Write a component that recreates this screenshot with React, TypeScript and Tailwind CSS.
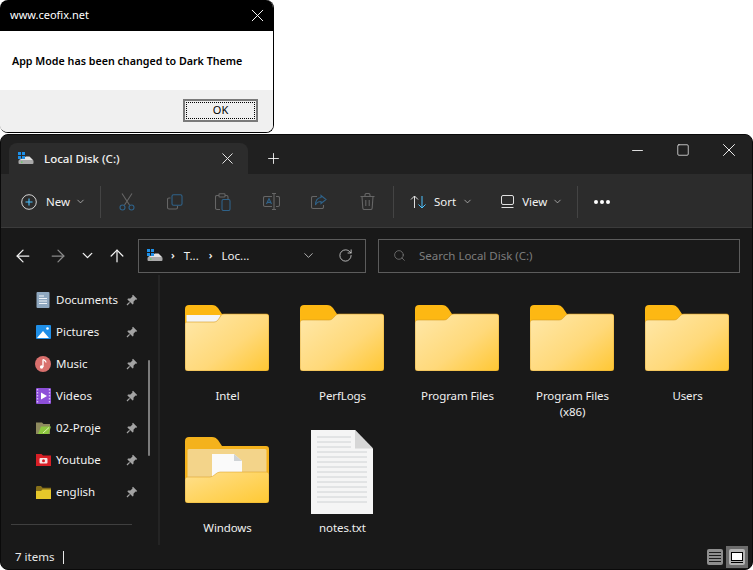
import { useId } from 'react';
import { ArrowLeft, ArrowRight, ArrowUp, ChevronDown, Minus, Plus, RotateCw, Search, Square, X } from 'lucide-react';

const font = { fontFamily: '"Noto Sans", sans-serif' };

function DriveIcon() {
  return (
    <svg width="16" height="13" viewBox="0 0 16 13" className="shrink-0">
      <path d="M8 4.500h3.500L15 8H1Z" fill="#e2e2e2" />
      <rect x="0" y="0" width="3" height="3" fill="#1e90e8" />
      <rect x="4" y="0" width="3" height="3" fill="#1e90e8" />
      <rect x="0" y="4" width="3" height="3" fill="#1e90e8" />
      <rect x="4" y="4" width="3" height="3" fill="#1e90e8" />
      <rect x="0.500" y="8" width="15" height="4" rx="1" fill="#a9a9a9" />
      <rect x="3" y="9.500" width="1.500" height="1.200" fill="#57d057" />
    </svg>
  );
}

function Folder({ paper = false }: { paper?: boolean }) {
  const id = useId();
  const front = paper
    ? 'M0 19C0 17.500 1 17 2.500 17H29C32 17 33 15 35 12C36 10 37 9 39 9H81C83 9 84 10 84 12V63C84 65 83 66 81 66H3C1 66 0 65 0 63Z'
    : 'M0 18C0 16 1 15 3 15H29C32 15 33 13 35 11C36 10 37 9 39 9H81C83 9 84 10 84 12V63C84 65 83 66 81 66H3C1 66 0 65 0 63Z';
  return (
    <svg width="84" height="66" viewBox="0 0 84 66">
      <defs>
        <linearGradient id={id} x1="0" y1="0.100" x2="1" y2="1">
          <stop offset="0" stopColor="#ffe7a6" />
          <stop offset="0.550" stopColor="#ffd97a" />
          <stop offset="1" stopColor="#ffc733" />
        </linearGradient>
      </defs>
      <path d="M0 4C0 1.500 1.500 0 4 0H27C30 0 31 1 33 3L37 9H81C83 9 84 10 84 12V30H0Z" fill="#fdb813" />
      {paper && <rect x="1.500" y="10" width="34" height="8" fill="#f4f5f7" />}
      <path d={front} fill={`url(#${id})`} stroke="#d79b1e" strokeWidth="0.600" />
    </svg>
  );
}

function OpenFolder() {
  const id = useId();
  return (
    <svg width="84" height="66" viewBox="0 0 84 66">
      <defs>
        <linearGradient id={id} x1="0" y1="0" x2="1" y2="1">
          <stop offset="0" stopColor="#ffe08e" />
          <stop offset="1" stopColor="#ffc933" />
        </linearGradient>
      </defs>
      <path d="M0 4C0 1.500 1.500 0 4 0H27C30 0 31 1 33 3L37 9H81C83 9 84 10 84 12V50H0Z" fill="#f4b21c" />
      <rect x="2.500" y="12" width="79" height="36" rx="1.500" fill="#f3d48a" />
      <path d="M27 17H49L57 24V48H27Z" fill="#fafafa" />
      <path d="M49 17V24H57Z" fill="#cfd3d6" />
      <path d="M0 43C0 41 1 40 3 40H25C29 40 31 35 35 35H81C83 35 84 36 84 38V63C84 65 83 66 81 66H3C1 66 0 65 0 63Z" fill={`url(#${id})`} stroke="#d79b1e" strokeWidth="0.500" />
    </svg>
  );
}

function TextFile() {
  return (
    <svg width="62" height="84" viewBox="0 0 62 84" className="mt-[4px]">
      <path d="M0 0H44L62 18.500V84H0Z" fill="#f5f5f5" />
      <path d="M44 0V18.500H62Z" fill="#d6d6d6" />
      <path d="M6 7H40M6 12H40M6 17H40M6 22H56M6 27H56M6 32H56M6 37H56M6 42H56M6 47H56M6 52H56M6 57H56M6 62H56M6 67H56M6 72H56" stroke="#cfd2d4" strokeWidth="1" />
    </svg>
  );
}

function Pin() {
  return (
    <svg width="12" height="12" viewBox="0 0 12 12" className="shrink-0">
      <path d="M7 .800 11.200 5 10.400 5.800 9.600 5.500 7.600 7.600 7.400 10 6.600 10.600 1.400 5.400 2 4.600 4.400 4.400 6.500 2.400 6.200 1.600Z" fill="#a3a3a3" />
      <path d="M3.600 8.400 1 11" stroke="#a3a3a3" strokeWidth="1.200" />
    </svg>
  );
}

const navIcons: Record<string, React.ReactNode> = {
  Documents: (
    <svg width="14" height="16" viewBox="0 0 14 16">
      <rect width="13" height="16" x="0.500" rx="1" fill="#8fa8c0" />
      <path d="M3 4h5M3 6.500h8M3 9h8M3 11.500h8" stroke="#f0f4f8" strokeWidth="1.200" />
    </svg>
  ),
  Pictures: (
    <svg width="15" height="14" viewBox="0 0 15 14">
      <rect width="15" height="14" rx="1" fill="#1f8fe8" />
      <path d="M1 13 7 6l6 7Z" fill="#fff" />
      <circle cx="11.500" cy="3.500" r="1.300" fill="#fff" />
    </svg>
  ),
  Music: (
    <svg width="16" height="16" viewBox="0 0 16 16">
      <circle cx="8" cy="8" r="8" fill="#d9706d" />
      <path d="M8 3.500v7.500" stroke="#fff" strokeWidth="1.300" />
      <path d="M8 3.500c1.500 1 3 1 3 3" stroke="#fff" strokeWidth="1.200" fill="none" />
      <circle cx="6.600" cy="11" r="1.700" fill="#fff" />
    </svg>
  ),
  Videos: (
    <svg width="15" height="16" viewBox="0 0 15 16">
      <rect width="15" height="16" rx="1" fill="#8d4fd8" />
      <path d="M1.500 1v14M13.500 1v14" stroke="#d8bdf8" strokeWidth="1.400" strokeDasharray="1.500 1.500" />
      <path d="M5 4.500 11 8l-6 3.500Z" fill="#fff" />
    </svg>
  ),
  '02-Proje': (
    <svg width="15" height="14" viewBox="0 0 15 14">
      <path d="M0 1.500h6l1.500 1.500H14v10H0Z" fill="#8e8a5e" />
      <path d="M2 13 5 5.500h10L12.500 13Z" fill="#8cc63f" />
      <path d="M7 12 13 6.500" stroke="#dff0b0" strokeWidth="1" />
    </svg>
  ),
  Youtube: (
    <svg width="15" height="12" viewBox="0 0 15 12">
      <path d="M0 0h5.500L7 1.500h8V12H0Z" fill="#d81f26" />
      <rect x="3.500" y="4" width="8" height="5.500" rx="1" fill="#f6e6e6" />
      <circle cx="7.500" cy="6.700" r="1.500" fill="#d81f26" />
    </svg>
  ),
  english: (
    <svg width="15" height="13" viewBox="0 0 15 13">
      <path d="M0 1.500C0 .700.500 0 1.300 0H5l1.500 1.700H15V13H0Z" fill="#87701a" />
      <path d="M0 5h5l1.500-1.500H15V13H0Z" fill="#e6c72a" />
    </svg>
  ),
};

function NavRow({ name }: { name: string }) {
  return (
    <div className="flex h-8 items-center pl-[34px] pr-[20px] text-[11.5px] text-[#f2f2f2]">
      <span className="flex w-[16px] shrink-0 justify-center">{navIcons[name]}</span>
      <span className="ml-[5px] flex-1">{name}</span>
      <Pin />
    </div>
  );
}

const files = ['Intel', 'PerfLogs', 'Program Files', 'Program Files (x86)', 'Users'];

function FileItem({ label, children }: { label: string; children: React.ReactNode }) {
  return (
    <div className="flex h-[132px] w-[115px] flex-col items-center">
      <div className="flex h-[96px] items-center justify-center">{children}</div>
      <div className="ml-[2px] mt-[2px] w-[90px] text-center text-[11.5px] leading-[16px] tracking-[-0.1px] text-[#f0f0f0]">{label}</div>
    </div>
  );
}

function Sep() {
  return <div className="h-[32px] w-px shrink-0 bg-[#444444]" />;
}

function Chev({ size = 11, color = '#c8c8c8' }: { size?: number; color?: string }) {
  return <ChevronDown size={size} color={color} strokeWidth={1.600} className="shrink-0" />;
}

function ToolbarIcons() {
  const g = '#666666';
  const b = '#2f6289';
  return (
    <div className="flex items-center">
      <span className="flex w-[48px] justify-center">
        <svg width="16" height="18" viewBox="0 0 16 18" fill="none" strokeWidth="1.100">
          <path d="M3 .500 10.500 12M13 .500 5.500 12" stroke={g} />
          <circle cx="3.500" cy="14.500" r="2.500" stroke={b} />
          <circle cx="12.500" cy="14.500" r="2.500" stroke={b} />
        </svg>
      </span>
      <span className="flex w-[48px] justify-center">
        <svg width="16" height="16" viewBox="0 0 16 16" fill="none" strokeWidth="1.100">
          <path d="M3.500 4H2a1.500 1.500 0 0 0-1.500 1.500v8A1.500 1.500 0 0 0 2 15h7a1.500 1.500 0 0 0 1.500-1.500V12" stroke={g} />
          <rect x="5" y=".800" width="10" height="10.500" rx="1.500" stroke={b} />
        </svg>
      </span>
      <span className="flex w-[48px] justify-center">
        <svg width="16" height="18" viewBox="0 0 16 18" fill="none" strokeWidth="1.100">
          <path d="M4 2.500H2A1.500 1.500 0 0 0 .500 4v11A1.500 1.500 0 0 0 2 16.500h3M10 2.500h1.500A1.500 1.500 0 0 1 13 4v2" stroke={g} />
          <rect x="4" y=".800" width="6" height="3.200" rx=".800" stroke={g} />
          <rect x="7" y="6.500" width="8" height="11" rx="1.400" stroke={b} />
        </svg>
      </span>
      <span className="flex w-[48px] justify-center">
        <svg width="17" height="17" viewBox="0 0 17 17" fill="none" strokeWidth="1.100">
          <path d="M9 3.500H2A1.500 1.500 0 0 0 .500 5v7A1.500 1.500 0 0 0 2 13.500h7M13 3.500h2A1.500 1.500 0 0 1 16.500 5v7a1.500 1.500 0 0 1-1.500 1.500h-2M11 .500v16M9 .500h4M9 16.500h4" stroke={g} />
          <path d="M3.500 11 6 5.500 8.500 11M4.400 9.400h3.200" stroke={b} />
        </svg>
      </span>
      <span className="flex w-[48px] justify-center">
        <svg width="16" height="16" viewBox="0 0 16 16" fill="none" strokeWidth="1.100">
          <path d="M6 2.500H2A1.500 1.500 0 0 0 .500 4v9A1.500 1.500 0 0 0 2 14.500h9a1.500 1.500 0 0 0 1.500-1.500v-2" stroke={g} />
          <path d="M10 1.500 15 5.500 10 9.500V7.500C7.500 7.500 5.500 8.500 4.500 11 4.500 7 6.500 3.800 10 3.500Z" stroke={b} />
        </svg>
      </span>
      <span className="flex w-[48px] justify-center">
        <svg width="15" height="17" viewBox="0 0 15 17" fill="none" stroke={g} strokeWidth="1.100">
          <path d="M.500 3.500h14M5 3.500V2a1.500 1.500 0 0 1 1.500-1.500h2A1.500 1.500 0 0 1 10 2v1.500M2 3.500l.800 11.500a1.500 1.500 0 0 0 1.500 1.500h6.400a1.500 1.500 0 0 0 1.500-1.500L13 3.500M5.800 7v6M9.200 7v6" />
        </svg>
      </span>
    </div>
  );
}

export default function App() {
  return (
    <div className="h-[570px] w-[753px] overflow-hidden bg-white" style={font}>
      {/* message box */}
      <div className="flex h-[133px] w-[274px] flex-col overflow-hidden rounded-[8px] border-r border-b border-black bg-white">
        <div className="flex h-[31px] shrink-0 items-center justify-between bg-black pl-[10px] pr-[5px] text-[11px] text-white">
          <span>www.ceofix.net</span>
          <X size={21} color="#ffffff" strokeWidth={1.100} />
        </div>
        <div className="flex h-[59px] items-center pl-[12px] pt-[2px] text-[10.7px] font-semibold text-black">
          App Mode has been changed to Dark Theme
        </div>
        <div className="flex flex-1 items-start justify-end bg-[#f0f0f0] pr-[15px] pt-[9px]">
          <button className="flex h-[23px] w-[75px] items-center justify-center border-2 border-[#7a7a7a] bg-[#f0f0f0] p-px">
            <span className="flex h-full w-full items-center justify-center border border-dotted border-black text-[11px] text-black">OK</span>
          </button>
        </div>
      </div>

      {/* explorer window */}
      <div className="mt-px flex h-[436px] flex-col overflow-hidden rounded-[8px] border border-[#0a0a0a] bg-[#191919]">
        <div className="flex h-[39px] shrink-0 items-end bg-[#202020] pl-[8px]">
          <div className="flex h-[31px] w-[239px] shrink-0 items-center rounded-t-[8px] bg-[#2c2c2c] pl-[9px] pr-[11px] text-[11.5px] font-medium text-[#f2f2f2]">
            <DriveIcon />
            <span className="ml-[10px] flex-1">Local Disk (C:)</span>
            <X size={19} color="#ededed" strokeWidth={1.200} />
          </div>
          <div className="flex h-[31px] w-[50px] shrink-0 items-center justify-center">
            <Plus size={17} color="#ffffff" strokeWidth={1.200} />
          </div>
          <div className="flex h-[39px] flex-1 items-start">
            <span className="ml-[317px] flex h-[30px] w-[45px] items-center justify-center"><Minus size={17} color="#ffffff" strokeWidth={1.200} /></span>
            <span className="flex h-[30px] w-[45px] items-center justify-center"><Square size={14} color="#ffffff" strokeWidth={1.200} /></span>
            <span className="flex h-[30px] w-[47px] items-center justify-center"><X size={22} color="#ffffff" strokeWidth={1} /></span>
          </div>
        </div>

        <div className="flex h-[54px] shrink-0 items-center border-b border-[#3b3b3b] bg-[#2c2c2c] pl-[20px] pt-[2px] text-[11.5px] text-[#f2f2f2]">
          <svg width="16" height="16" viewBox="0 0 16 16" fill="none" className="shrink-0">
            <circle cx="8" cy="8" r="7.300" stroke="#d4d4d4" strokeWidth="1" />
            <path d="M8 4.500v7M4.500 8h7" stroke="#4cc2ff" strokeWidth="1.100" />
          </svg>
          <span className="ml-[9px]">New</span>
          <span className="ml-[5px]"><Chev /></span>
          <span className="ml-[14px]"><Sep /></span>
          <span className="ml-[2px]"><ToolbarIcons /></span>
          <span className="ml-[2px]"><Sep /></span>
          <svg width="17" height="14" viewBox="0 0 17 14" fill="none" strokeWidth="1" className="ml-[16px] shrink-0">
            <path d="M4.500 13V1M1 4.500 4.500 1 8 4.500" stroke="#e0e0e0" />
            <path d="M12 1v12M8.500 9.500 12 13l3.500-3.500" stroke="#4cc2ff" />
          </svg>
          <span className="ml-[7px]">Sort</span>
          <span className="ml-[6px]"><Chev /></span>
          <svg width="13" height="13" viewBox="0 0 13 13" fill="none" stroke="#e0e0e0" strokeWidth="1" className="ml-[28px] shrink-0">
            <rect x=".500" y=".500" width="12" height="9" rx="1.500" />
            <path d="M.500 12.500h12" />
          </svg>
          <span className="ml-[8px]">View</span>
          <span className="ml-[5px]"><Chev /></span>
          <span className="ml-[14px]"><Sep /></span>
          <span className="ml-[16px] flex gap-[2px]">
            <span className="h-[4px] w-[4px] rounded-full bg-white" />
            <span className="h-[4px] w-[4px] rounded-full bg-white" />
            <span className="h-[4px] w-[4px] rounded-full bg-white" />
          </span>
        </div>

        <div className="flex h-[47px] shrink-0 items-center pl-[4px] pr-[12px] pt-[8px]">
          <span className="flex w-[35px] justify-center"><ArrowLeft size={20} color="#f0f0f0" strokeWidth={1.500} /></span>
          <span className="flex w-[35px] justify-center"><ArrowRight size={20} color="#8a8a8a" strokeWidth={1.500} /></span>
          <span className="flex w-[24px] justify-center"><ChevronDown size={17} color="#f0f0f0" strokeWidth={1.800} /></span>
          <span className="flex w-[35px] justify-center"><ArrowUp size={20} color="#f0f0f0" strokeWidth={1.500} /></span>
          <div className="ml-[4px] flex h-[34px] w-[228px] shrink-0 items-center border border-[#5c5c5c] pl-[8px] pr-[12px] text-[11.5px] text-[#f0f0f0]">
            <DriveIcon />
            <span className="ml-[8px] text-[11px] font-semibold">›</span>
            <span className="ml-[9px]">T...</span>
            <span className="ml-[10px] text-[11px] font-semibold">›</span>
            <span className="ml-[9px] flex-1">Loc...</span>
            <ChevronDown size={15} color="#c8c8c8" strokeWidth={1.400} />
            <RotateCw size={15} color="#d8d8d8" strokeWidth={1.300} className="ml-[22px]" />
          </div>
          <div className="ml-[12px] flex h-[34px] flex-1 items-center border border-[#5c5c5c] pl-[14px] text-[11.5px] text-[#7d7d7d]">
            <Search size={13} color="#858585" strokeWidth={1.300} />
            <span className="ml-[13px]">Search Local Disk (C:)</span>
          </div>
        </div>

        <div className="relative flex min-h-0 flex-1">
          <div className="w-[159px] shrink-0 border-r-2 border-[#242424] pt-[9px]">
            {Object.keys(navIcons).map((name) => (
              <NavRow key={name} name={name} />
            ))}
            <div className="ml-[10px] mt-[16px] h-px w-[121px] bg-[#3f3f3f]" />
          </div>
          <div className="absolute left-[147px] top-[85px] h-[96px] w-[2px] rounded-full bg-[#7c7c7c]" />
          <div className="flex flex-1 flex-wrap content-start pl-[9px] pt-[15px]">
            {files.map((f) => (
              <FileItem key={f} label={f}><Folder paper={f === 'Intel'} /></FileItem>
            ))}
            <FileItem label="Windows"><OpenFolder /></FileItem>
            <FileItem label="notes.txt"><TextFile /></FileItem>
          </div>
        </div>

        <div className="flex h-[24px] shrink-0 items-center pl-[14px] pr-[4px] text-[11.5px] text-[#e8e8e8]">
          <span>7 items</span>
          <span className="ml-[9px] h-[13px] w-px bg-[#e8e8e8]" />
          <span className="ml-auto flex h-[16px] w-[16px] flex-col justify-center gap-[2px] rounded-[2px] bg-[#8e8e8e] px-[2px]">
            <span className="h-px bg-[#1c1c1c]" />
            <span className="h-px bg-[#1c1c1c]" />
            <span className="h-px bg-[#1c1c1c]" />
            <span className="h-px bg-[#1c1c1c]" />
          </span>
          <span className="ml-[3px] flex h-[22px] w-[22px] items-center justify-center bg-[#6c6c6c]">
            <span className="flex h-[16px] w-[16px] flex-col items-center justify-center rounded-[2px] bg-[#b5b5b5]">
              <span className="h-[9px] w-[12px] border border-black bg-white" />
              <span className="mt-px h-px w-[12px] bg-black" />
            </span>
          </span>
        </div>
      </div>
    </div>
  );
}
